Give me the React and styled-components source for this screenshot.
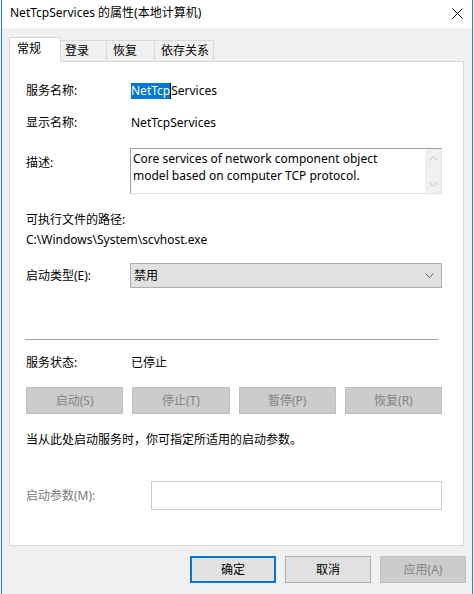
import styled, { createGlobalStyle } from "styled-components";

const GlobalStyle = createGlobalStyle`
  html, body {
    margin: 0;
    padding: 0;
    background: #fff;
  }
  body {
    font-family: "Noto Sans", "Noto Sans CJK SC", sans-serif;
    font-size: 12px;
    line-height: 16px;
    color: #000;
  }
`;

const Window = styled.div`
  display: flex;
  flex-direction: column;
  box-sizing: border-box;
  width: 472px;
  height: 594px;
  margin-left: 1px;
  border-left: 1px solid #1883d7;
  border-right: 1px solid #1883d7;
  background: #f0f0f0;
`;

const TitleBar = styled.div`
  display: flex;
  align-items: center;
  justify-content: space-between;
  flex-shrink: 0;
  height: 28px;
  padding: 0 9px 2px 8px;
  box-sizing: border-box;
  background: #fff;
`;

const Title = styled.span`
  font-size: 12px;
  white-space: nowrap;
`;

const Body = styled.div`
  flex: 1;
  display: flex;
  flex-direction: column;
  padding: 9px 8px 0 7px;
`;

const TabStrip = styled.div`
  display: flex;
  align-items: flex-end;
  height: 24px;
`;

const Tab = styled.div`
  box-sizing: border-box;
  width: ${(p) => p.$w}px;
  height: ${(p) => (p.$active ? 25 : 21)}px;
  margin-bottom: ${(p) => (p.$active ? -1 : 0)}px;
  padding-left: ${(p) => p.$pad}px;
  display: flex;
  align-items: center;
  padding-bottom: ${(p) => (p.$active ? 2 : 0)}px;
  border: 1px solid #d9d9d9;
  border-bottom: none;
  border-left: ${(p) => (p.$active ? "1px solid #d9d9d9" : "none")};
  background: ${(p) => (p.$active ? "#fff" : "#f0f0f0")};
  position: relative;
  z-index: ${(p) => (p.$active ? 1 : 0)};
  white-space: nowrap;
`;

const Panel = styled.div`
  box-sizing: border-box;
  height: 485px;
  border: 1px solid #d9d9d9;
  background: #fff;
  padding: 21px 21px 0 16px;
  display: flex;
  flex-direction: column;
`;

const Row = styled.div`
  display: grid;
  grid-template-columns: 104px 1fr;
  align-items: ${(p) => (p.$top ? "start" : "center")};
  margin-top: ${(p) => p.$mt || 0}px;
`;

const Label = styled.div`
  color: ${(p) => (p.$disabled ? "#7a7a7a" : "#000")};
  margin-top: ${(p) => p.$mt || 0}px;
  white-space: nowrap;
`;

const Value = styled.div`
  padding-left: 1px;
  white-space: nowrap;
  display: flex;
  align-items: center;
`;

const Selected = styled.span`
  background: #0078d7;
  color: #fff;
`;

const Caret = styled.span`
  display: inline-block;
  width: 1px;
  height: 16px;
  background: #000;
`;

const Line = styled.div`
  margin-top: ${(p) => p.$mt || 0}px;
  white-space: nowrap;
`;

const TextBox = styled.div`
  box-sizing: border-box;
  height: 46px;
  display: flex;
  border: 1px solid #e3e3e3;
  border-top-color: #a0a0a0;
  border-left-color: #a0a0a0;
`;

const TextBody = styled.div`
  flex: 1;
  padding: 1px 2px;
  line-height: 17px;
`;

const ScrollTrack = styled.div`
  width: 16px;
  background: #f0f0f0;
  display: flex;
  flex-direction: column;
  align-items: center;
  justify-content: space-between;
  padding: 7px 0 6px;
`;

const Select = styled.div`
  box-sizing: border-box;
  height: 25px;
  display: flex;
  align-items: center;
  justify-content: space-between;
  padding: 0 7px 0 3px;
  background: #e1e1e1;
  border: 1px solid #adadad;
`;

const Separator = styled.div`
  height: 1px;
  background: #a0a0a0;
  margin: 51px 4px 0 -1px;
`;

const ButtonGrid = styled.div`
  display: grid;
  grid-template-columns: repeat(4, 1fr);
  column-gap: 9px;
  margin-top: 16px;
`;

const Button = styled.div`
  box-sizing: border-box;
  height: 27px;
  display: flex;
  align-items: center;
  justify-content: center;
  background: ${(p) => (p.$disabled ? "#cccccc" : "#e1e1e1")};
  color: ${(p) => (p.$disabled ? "#838383" : "#000")};
  border: ${(p) =>
    p.$primary
      ? "2px solid #0078d7"
      : p.$disabled
      ? "1px solid #bfbfbf"
      : "1px solid #adadad"};
  width: ${(p) => (p.$w ? `${p.$w}px` : "auto")};
  white-space: nowrap;
`;

const Input = styled.div`
  box-sizing: border-box;
  height: 29px;
  margin-left: 21px;
  border: 1px solid #cccccc;
  background: #fff;
`;

const ButtonBar = styled.div`
  display: flex;
  justify-content: flex-end;
  gap: 9px;
  margin: 10px -2px 0 0;
`;

function CloseIcon() {
  return (
    <svg width="11" height="11" viewBox="0 0 11 11">
      <path d="M0.5 0.5 L10.5 10.5 M10.5 0.5 L0.5 10.5" stroke="#000" strokeWidth="1" fill="none" />
    </svg>
  );
}

function Chevron({ up, color = "#606060", w = 9, h = 5 }) {
  return (
    <svg width={w} height={h} viewBox="0 0 9 5">
      <path
        d={up ? "M0.5 4.5 L4.5 0.5 L8.5 4.5" : "M0.5 0.5 L4.5 4.5 L8.5 0.5"}
        stroke={color}
        strokeWidth="1"
        fill="none"
      />
    </svg>
  );
}

const tabs = [
  { label: "常规", w: 52, pad: 7, active: true },
  { label: "登录", w: 46, pad: 4 },
  { label: "恢复", w: 48, pad: 6 },
  { label: "依存关系", w: 59, pad: 6 },
];

export default function App() {
  return (
    <>
      <GlobalStyle />
      <Window>
        <TitleBar>
          <Title>NetTcpServices 的属性(本地计算机)</Title>
          <CloseIcon />
        </TitleBar>
        <Body>
          <TabStrip>
            {tabs.map((t) => (
              <Tab key={t.label} $w={t.w} $pad={t.pad} $active={t.active}>
                {t.label}
              </Tab>
            ))}
          </TabStrip>
          <Panel>
            <Row>
              <Label>服务名称:</Label>
              <Value>
                <Selected>NetTcp</Selected>
                <Caret />
                Services
              </Value>
            </Row>
            <Row $mt={16}>
              <Label>显示名称:</Label>
              <Value>NetTcpServices</Value>
            </Row>
            <Row $mt={17} $top>
              <Label $mt={7}>描述:</Label>
              <TextBox>
                <TextBody>
                  Core services of network component object
                  <br />
                  model based on computer TCP protocol.
                </TextBody>
                <ScrollTrack>
                  <Chevron up color="#c2c2c2" w={9} h={5} />
                  <Chevron color="#c2c2c2" w={9} h={5} />
                </ScrollTrack>
              </TextBox>
            </Row>
            <Line $mt={18}>可执行文件的路径:</Line>
            <Line $mt={4}>C:\Windows\System\scvhost.exe</Line>
            <Row $mt={15}>
              <Label>启动类型(E):</Label>
              <Select>
                <span>禁用</span>
                <Chevron />
              </Select>
            </Row>
            <Separator />
            <Row $mt={15}>
              <Label>服务状态:</Label>
              <Value>已停止</Value>
            </Row>
            <ButtonGrid>
              <Button $disabled>启动(S)</Button>
              <Button $disabled>停止(T)</Button>
              <Button $disabled>暂停(P)</Button>
              <Button $disabled>恢复(R)</Button>
            </ButtonGrid>
            <Line $mt={18}>当从此处启动服务时，你可指定所适用的启动参数。</Line>
            <Row $mt={33}>
              <Label $disabled>启动参数(M):</Label>
              <Input />
            </Row>
          </Panel>
          <ButtonBar>
            <Button $primary $w={86}>确定</Button>
            <Button $w={86}>取消</Button>
            <Button $disabled $w={86}>应用(A)</Button>
          </ButtonBar>
        </Body>
      </Window>
    </>
  );
}
